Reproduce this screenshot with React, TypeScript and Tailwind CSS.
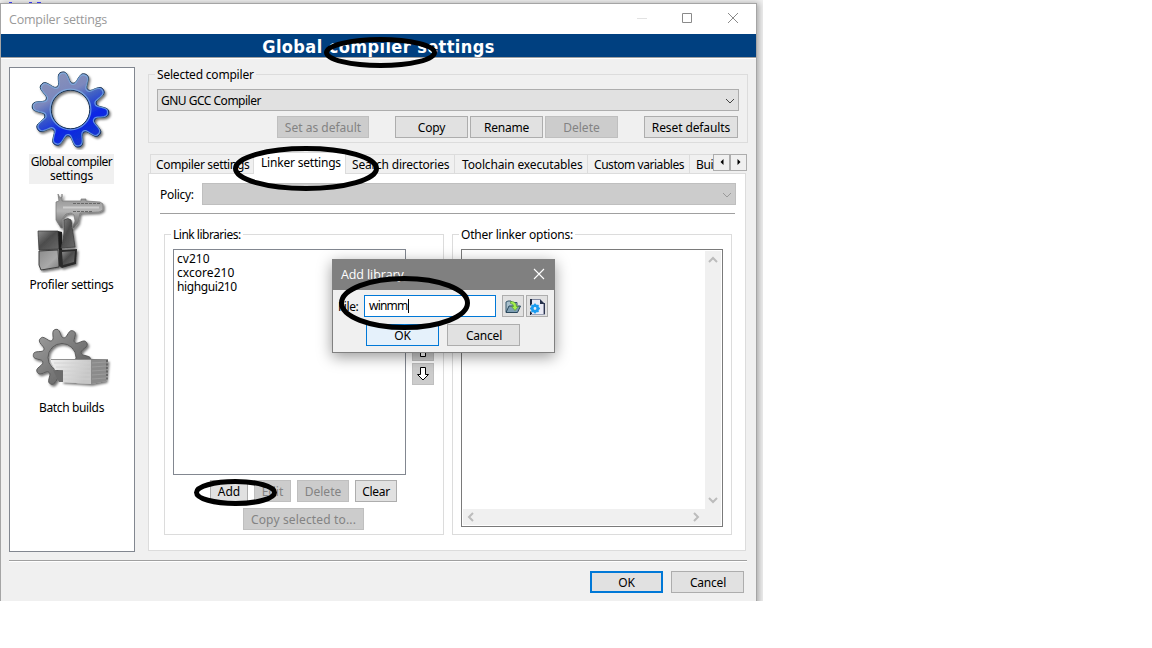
import type { ReactNode } from "react";

function gearPath(cx: number, cy: number, outer: number, valley: number, hole: number, teeth: number, start: number) {
  const mid = (outer + valley) / 2;
  const amp = (outer - valley) / 2;
  let d = "";
  for (let a = 0; a < 360; a += 2) {
    const t = (a * Math.PI) / 180;
    const c = Math.cos(teeth * (t - (start * Math.PI) / 180));
    const r = mid + (amp * Math.tanh(1.6 * c)) / Math.tanh(1.6);
    d += `${a === 0 ? "M" : "L"}${(cx + r * Math.cos(t)).toFixed(2)} ${(cy + r * Math.sin(t)).toFixed(2)}`;
  }
  return `${d}ZM${cx + hole} ${cy}A${hole} ${hole} 0 1 0 ${cx - hole} ${cy}A${hole} ${hole} 0 1 0 ${cx + hole} ${cy}Z`;
}

function Button({ children, className, disabled }: { children?: ReactNode; className: string; disabled?: boolean }) {
  return (
    <button
      className={`flex h-[22px] shrink-0 items-center justify-center whitespace-nowrap border pt-px ${
        disabled ? "border-[#bfbfbf] bg-[#cccccc] text-[#838383]" : "border-[#adadad] bg-[#e1e1e1]"
      } ${className}`}
    >
      {children}
    </button>
  );
}

function Group({ title, className, titleClass, children }: { title: string; className: string; titleClass: string; children: ReactNode }) {
  return (
    <section className={`relative border border-[#dcdcdc] ${className}`}>
      <h2 className={`absolute -top-[8px] left-[6px] bg-inherit px-[2px] leading-[16px] whitespace-nowrap ${titleClass}`}>{title}</h2>
      {children}
    </section>
  );
}

function Chevron({ className, d = "M1 3L5 7L9 3" }: { className: string; d?: string }) {
  return (
    <svg width="10" height="10" viewBox="0 0 10 10" fill="none" stroke="currentColor" className={className}>
      <path d={d} />
    </svg>
  );
}

function GlobalIcon() {
  return (
    <svg width="84" height="80" viewBox="0 0 84 80" className="shrink-0">
      <defs>
        <linearGradient id="blue" x1="0.25" y1="0" x2="0.7" y2="0.9">
          <stop offset="0" stopColor="#8b93b8" />
          <stop offset="0.33" stopColor="#7c88bd" />
          <stop offset="0.5" stopColor="#3f5fc4" />
          <stop offset="0.75" stopColor="#0a26e6" />
          <stop offset="1" stopColor="#1435d0" />
        </linearGradient>
        <filter id="drop" x="-20%" y="-20%" width="150%" height="150%">
          <feDropShadow dx="1.5" dy="1.8" stdDeviation="1.2" floodColor="#000" floodOpacity="0.55" />
        </filter>
      </defs>
      <g filter="url(#drop)" fillRule="evenodd">
        <path d={gearPath(41.5, 39.5, 38.4, 26.5, 19.3, 10, 5)} fill="url(#blue)" stroke="#173352" strokeWidth="1" />
      </g>
      <path d={gearPath(41.5, 39.5, 37.1, 25.2, 20.4, 10, 5)} fill="none" stroke="#7fb2e6" strokeWidth="1.2" opacity="0.75" />
    </svg>
  );
}

function ProfilerIcon() {
  return (
    <svg width="84" height="80" viewBox="0 0 84 80" className="shrink-0">
      <defs>
        <linearGradient id="steel" x1="0" y1="0" x2="0" y2="1">
          <stop offset="0" stopColor="#8c8c8c" />
          <stop offset="0.5" stopColor="#b5b5b5" />
          <stop offset="1" stopColor="#5c5c5c" />
        </linearGradient>
        <linearGradient id="dark" x1="0" y1="0" x2="1" y2="1">
          <stop offset="0" stopColor="#8c8c8c" />
          <stop offset="0.45" stopColor="#4c4c4c" />
          <stop offset="1" stopColor="#6a6a6a" />
        </linearGradient>
        <linearGradient id="light" x1="0" y1="0" x2="1" y2="1">
          <stop offset="0" stopColor="#8b8b8b" />
          <stop offset="0.6" stopColor="#a9a9a9" />
          <stop offset="1" stopColor="#7b7b7b" />
        </linearGradient>
      </defs>
      <g filter="url(#drop)">
        <path d="M9 38L29 38L30 56L10 57Z" fill="url(#dark)" stroke="#333" strokeWidth="0.7" />
        <path d="M29 38L33 39L33 57L30 57Z" fill="#1c1c1c" />
        <path d="M10 58L29 57L30 74L12 77L10 72Z" fill="url(#light)" stroke="#333" strokeWidth="0.9" />
        <path d="M30 57L48 56L47 71L33 75L30 73Z" fill="#2c2c2c" />
        <path d="M33 59L46 58L45 69L34 72Z" fill="url(#dark)" />
        <path d="M35 27Q39 24 42 27L46 54L32 55Q36 43 35 27Z" fill="url(#dark)" stroke="#404040" strokeWidth="0.8" />
        <path
          d="M29 1L31 5L33 4L33 1V8H43L52 8V6H57V8L71 9L74 11V17L70 19L51 20L49 30L45 35L43 35L46 28L45 22L42 20L37 21L33 26L34 35H32L27 27V9L30 8Z"
          fill="url(#steel)"
          stroke="#777"
          strokeWidth="0.7"
        />
      </g>
      <path d="M44 10.5H72M44 18.5H63" stroke="#686868" strokeDasharray="3 1" />
      <path d="M34 14.5H70" stroke="#cdcdcd" strokeWidth="2" />
    </svg>
  );
}

function BatchIcon() {
  return (
    <svg width="84" height="80" viewBox="0 0 84 80" className="shrink-0">
      <defs>
        <linearGradient id="gray" x1="0" y1="0" x2="1" y2="1">
          <stop offset="0" stopColor="#a2a2a2" />
          <stop offset="0.5" stopColor="#7b7b7b" />
          <stop offset="1" stopColor="#555" />
        </linearGradient>
        <linearGradient id="paper" x1="0" y1="0" x2="1" y2="0.3">
          <stop offset="0" stopColor="#f0f0f0" />
          <stop offset="1" stopColor="#c6c6c6" />
        </linearGradient>
        <clipPath id="gearCut">
          <path d="M0 0H65V43H33V72H0Z" />
        </clipPath>
      </defs>
      <g filter="url(#drop)">
        <g clipPath="url(#gearCut)">
          <path d={gearPath(33, 41.5, 28.8, 19.8, 14, 10, 5)} fill="url(#gray)" fillRule="evenodd" stroke="#555" strokeWidth="0.9" />
        </g>
        <path d="M22 44L62 43L62 68L33 66V54H26Z" fill="url(#paper)" />
        <path d="M62 43L79 44L77 65L62 68Z" fill="#8b8b8b" />
      </g>
      <path d="M24 54Q30 56 34 54V66L30 66Z" fill="#6c6c6c" />
      <path d="M25 47H61M27 51H61M34 55H61M34 59H61M34 63H61" stroke="#d0d0d0" strokeWidth="0.8" />
      <path d="M63 47L77 46M63 51L77 50M63 55L77 54M63 59L77 58M63 63L77 62" stroke="#a0a0a0" strokeWidth="0.8" />
      <path d="M78 44V65" stroke="#555" strokeWidth="1.4" strokeDasharray="2 1.5" />
      <path d="M22 43.5H79" stroke="#777" strokeWidth="0.8" />
    </svg>
  );
}

function Category({ icon, children, selected }: { icon: ReactNode; children: ReactNode; selected?: boolean }) {
  return (
    <li className="flex h-[123px] flex-col items-center gap-1">
      {icon}
      <span className={`flex w-[85px] flex-col items-center pt-px pl-px leading-[14px] whitespace-nowrap ${selected ? "h-[30px] bg-[#f0f0f0]" : ""}`}>
        {children}
      </span>
    </li>
  );
}

function AddLibraryDialog() {
  return (
    <div className="absolute left-[332px] top-[259px] z-10 flex h-[94px] w-[223px] flex-col border border-[#808080] bg-[#f0f0f0] shadow-[0_4px_14px_rgba(0,0,0,0.4)]">
      <div className="flex h-[30px] items-center justify-between bg-[#808080] pr-[9px] pl-2 font-['Open_Sans',sans-serif] text-[12.5px] tracking-[-0.1px] text-white">
        <span>Add library</span>
        <svg width="12" height="12" viewBox="0 0 12 12" stroke="white" strokeWidth="1.1" className="mb-[2px]">
          <path d="M1 1L11 11M11 1L1 11" />
        </svg>
      </div>
      <div className="mt-[5px] flex items-center">
        <span className="w-[31px] pt-[2px] pl-[5px] tracking-[-0.4px]">File:</span>
        <div className="mr-[6px] flex h-[22px] w-[132px] items-center border border-[#0078d7] bg-white pb-px pl-[4px] tracking-[-0.8px]">
          winmm
          <i className="ml-px h-[14px] w-px bg-black" />
        </div>
        <Button className="mr-[2px] w-[22px]">
          <svg width="16" height="16" viewBox="0 0 16 16" className="shrink-0">
            <path d="M1 13V3L3 2H6L7.5 3.5H12V6" fill="#a9c0cc" stroke="#36566b" />
            <path d="M1 13.5L4 7H15.5L12.5 13.5Z" fill="#7f9fb3" stroke="#29485d" />
            <path d="M5.5 2.5Q11 2 11.5 7.5H13.5L10 11.5L6.5 7.5H8.5Q8.5 4.5 5.5 4.5Z" fill="#a6f04c" stroke="#4c8d30" strokeWidth="0.6" />
          </svg>
        </Button>
        <Button className="w-[22px]">
          <svg width="16" height="16" viewBox="0 0 16 16" className="shrink-0">
            <path d="M2 0H11.5L15.5 4V16H2Z" fill="#e9eaf5" />
            <path d="M2 .5H11" stroke="#8088a0" />
            <path d="M1 0H3V5L1 7ZM1 12L3 14V16H1Z" fill="#1d2740" />
            <path d="M11 0L16 5H11Z" fill="#26324c" />
            <path d="M15.3 4V16" stroke="#2b3550" strokeWidth="1.4" />
            <path d="M2 15.5H16" stroke="#9aa0b4" />
            <path d={gearPath(6, 9.5, 5, 4.1, 1.4, 8, 0)} fill="#1b9cf0" fillRule="evenodd" />
          </svg>
        </Button>
      </div>
      <div className="mt-[7px] flex gap-2 pl-[33px]">
        <Button className="w-[73px] border-[#0078d7]! bg-[#e5f1fb]!">OK</Button>
        <Button className="w-[73px] pl-px">Cancel</Button>
      </div>
    </div>
  );
}

function Tab({ children, className }: { children: ReactNode; className: string }) {
  return (
    <div className={`flex h-[19px] shrink-0 items-center overflow-hidden border-t border-r border-[#dcdcdc] pt-[2px] whitespace-nowrap ${className}`}>
      {children}
    </div>
  );
}

function LinkerPanel() {
  return (
    <div className="h-[378px] w-[598px] border border-[#dcdcdc] bg-white pt-[9px] pl-[11px]">
      <div className="flex items-center">
        <span className="w-[42px] pt-[2px] tracking-[-0.3px]">Policy:</span>
        <div className="flex h-[22px] w-[534px] items-center justify-end border border-[#bfbfbf] bg-[#cccccc] pr-[3px]">
          <Chevron className="mt-px text-[#9a9a9a]" />
        </div>
      </div>
      <div className="mt-[8px] h-px w-[575px] bg-[#a0a0a0]" />
      <div className="mt-[20px] flex gap-2 pl-[4px]">
        <Group title="Link libraries:" titleClass="tracking-[-0.5px]" className="h-[301px] w-[280px] bg-white pt-[14px] pl-[8px]">
          <div className="flex">
            <ul className="h-[226px] w-[233px] border border-[#828790] pt-[2px] pl-[3px] leading-[14px] tracking-[0.05px]">
              <li>cv210</li>
              <li>cxcore210</li>
              <li className="tracking-[-0.4px]">highgui210</li>
            </ul>
            <div className="ml-[6px] flex flex-col gap-[2px] pt-[90px]">
              <Button disabled className="w-[22px]">
                <svg width="14" height="16" viewBox="0 0 14 16" fill="white" stroke="black" className="mb-[2px] shrink-0">
                  <path d="M4.5 14.5V7.5H1.5L7 1.5L12.5 7.5H9.5V14.5Z" />
                </svg>
              </Button>
              <Button disabled className="w-[22px]">
                <svg width="14" height="16" viewBox="0 0 14 16" fill="white" stroke="black" className="mb-[2px] shrink-0">
                  <path d="M4.5 1.5V8.5H1.5L7 14L12.5 8.5H9.5V1.5Z" />
                </svg>
              </Button>
            </div>
          </div>
          <div className="mt-[5px] flex gap-[6px] pl-[37px] tracking-normal">
            <Button className="w-[38px]">Add</Button>
            <Button disabled className="w-[37px]">Edit</Button>
            <Button disabled className="w-[52px]">Delete</Button>
            <Button className="w-[42px] tracking-[-0.3px]">Clear</Button>
          </div>
          <Button disabled className="mt-[6px] ml-[70px] w-[121px] tracking-[0.15px]">Copy selected to...</Button>
        </Group>
        <Group title="Other linker options:" titleClass="tracking-[-0.22px]" className="h-[301px] w-[280px] bg-white pt-[14px] pl-[8px]">
          <div className="flex h-[278px] w-[262px] flex-col border border-[#7a7a7a] p-px">
            <div className="flex h-[258px] justify-end">
              <div className="flex w-[16px] flex-col items-center justify-between bg-[#f0f0f0] py-[4px] text-[#bcbcbc]">
                <Chevron className="stroke-2" d="M1 7L5 3L9 7" />
                <Chevron className="stroke-2" />
              </div>
            </div>
            <div className="flex h-[16px] items-center justify-between bg-[#f0f0f0] pr-[20px] pl-[3px] text-[#bcbcbc]">
              <Chevron className="stroke-2" d="M7 1L3 5L7 9" />
              <Chevron className="stroke-2" d="M3 1L7 5L3 9" />
            </div>
          </div>
        </Group>
      </div>
    </div>
  );
}

function Annotations() {
  return (
    <svg width="763" height="601" viewBox="0 0 763 601" fill="none" stroke="black" className="pointer-events-none absolute top-0 left-0 z-20">
      <ellipse cx="380.5" cy="52.5" rx="54" ry="13" strokeWidth="5" />
      <ellipse cx="306" cy="168.5" rx="70.5" ry="20" strokeWidth="5" />
      <ellipse cx="404.5" cy="303" rx="63" ry="24.5" strokeWidth="5" />
      <ellipse cx="235.5" cy="492.5" rx="39" ry="11" strokeWidth="5" />
    </svg>
  );
}

export default function App() {
  return (
    <div className="h-[648px] w-[1152px] overflow-hidden bg-white font-['Noto_Sans',sans-serif] text-[12px] leading-[16px] tracking-[-0.2px] text-black">
      <div className="relative h-[601px] w-[763px] overflow-hidden bg-[#f0f0f0] pt-[3px]">
        <svg width="60" height="3" viewBox="0 0 60 3" stroke="#3a3aec" className="absolute top-0 left-0">
          <path d="M9 2.5H12M29 2.5H32M37 2.5H41" />
        </svg>
        <main className="h-[620px] w-[757px] border border-[#a5a5a5] bg-[#f0f0f0] shadow-[2px_0_6px_rgba(0,0,0,0.3)]">
          <header className="flex h-[30px] items-center bg-white pl-[8px] font-['Open_Sans',sans-serif] text-[12.5px] text-[#999999]">
            <span className="flex-1 pt-px tracking-[-0.22px]">Compiler settings</span>
            <svg width="104" height="12" viewBox="0 0 104 12" fill="none" stroke="#8a8a8a" className="mr-[16px] mb-[2px]">
              <path d="M1 6.5H11" stroke="#e2e2e2" />
              <path d="M46.5 1.5H55.5V10.5H46.5Z" />
              <path d="M92 1L102 11M102 1L92 11" />
            </svg>
          </header>
          <div className="flex h-[25px] items-center justify-center border-b border-white bg-[#004080] pt-px font-['DejaVu_Sans_Condensed','DejaVu_Sans',sans-serif] text-[18px] font-bold tracking-[0.4px] text-white shadow-[inset_0_-1px_0_#a0a0a0]">
            <h1>Global compiler settings</h1>
          </div>
          <div className="flex pt-[8px] pl-[8px]">
            <ul className="h-[485px] w-[126px] border border-[#828790] bg-white pt-[2px] pr-[2px]">
              <Category selected icon={<GlobalIcon />}>
                <span className="-mx-4 tracking-[-0.5px]">Global compiler</span>
                <span>settings</span>
              </Category>
              <Category icon={<ProfilerIcon />}>
                <span className="tracking-[-0.3px]">Profiler settings</span>
              </Category>
              <Category icon={<BatchIcon />}>
                <span className="tracking-[-0.35px]">Batch builds</span>
              </Category>
            </ul>
            <div className="ml-[13px] pt-[7px]">
              <Group title="Selected compiler" titleClass="tracking-[-0.2px]" className="h-[69px] w-[600px] bg-[#f0f0f0] pt-[14px] pl-[8px]">
                <div className="flex h-[22px] w-[582px] items-center justify-between border border-[#adadad] bg-[#e1e1e1] pr-[3px] pl-[3px]">
                  <span className="pt-[2px] tracking-[-0.5px]">GNU GCC Compiler</span>
                  <Chevron className="mt-px text-[#444444]" />
                </div>
                <div className="mt-[5px] flex gap-[2px] pl-[120px]">
                  <Button disabled className="mr-[24px] w-[92px] tracking-normal">Set as default</Button>
                  <Button className="w-[73px]">Copy</Button>
                  <Button className="w-[73px]">Rename</Button>
                  <Button disabled className="w-[73px] tracking-normal">Delete</Button>
                  <Button className="ml-[24px] w-[94px] tracking-[-0.1px]">Reset defaults</Button>
                </div>
              </Group>
              <div className="mt-[9px] flex h-[21px] items-end pl-[2px]">
                <Tab className="w-[104px] border-l pl-[5px] tracking-[-0.35px]">Compiler settings</Tab>
                <div className="relative z-[1] -mb-px h-[22px] w-[92px] shrink-0 border-t border-r border-[#dcdcdc] bg-white pt-[2px] pl-[7px] whitespace-nowrap">
                  Linker settings
                </div>
                <Tab className="w-[109px] pl-[6px]">Search directories</Tab>
                <Tab className="w-[133px] pl-[7px] tracking-[-0.15px]">Toolchain executables</Tab>
                <Tab className="w-[102px] pl-[6px] tracking-[-0.45px]">Custom variables</Tab>
                <Tab className="w-[23px] border-r-0 pl-[6px] tracking-[-0.4px]">Bui</Tab>
                <div className="flex h-[19px] items-start">
                  <Button className="h-[17px]! w-[17px] bg-[#f0f0f0]!">
                    <svg width="4" height="6" viewBox="0 0 4 6" className="mb-[3px]">
                      <path d="M3.5 0V6L.5 3Z" />
                    </svg>
                  </Button>
                  <Button className="h-[17px]! w-[17px] bg-[#f0f0f0]!">
                    <svg width="4" height="6" viewBox="0 0 4 6" className="mb-[3px]">
                      <path d="M.5 0V6L3.5 3Z" />
                    </svg>
                  </Button>
                </div>
              </div>
              <LinkerPanel />
            </div>
          </div>
          <div className="mt-[8px] ml-[8px] h-[2px] w-[738px] border-b border-white bg-[#a0a0a0]" />
          <div className="mt-[9px] flex gap-2 pl-[589px]">
            <Button className="w-[73px] border-2 border-[#0078d7]!">OK</Button>
            <Button className="w-[73px] pl-px">Cancel</Button>
          </div>
        </main>
        <AddLibraryDialog />
        <Annotations />
      </div>
    </div>
  );
}
